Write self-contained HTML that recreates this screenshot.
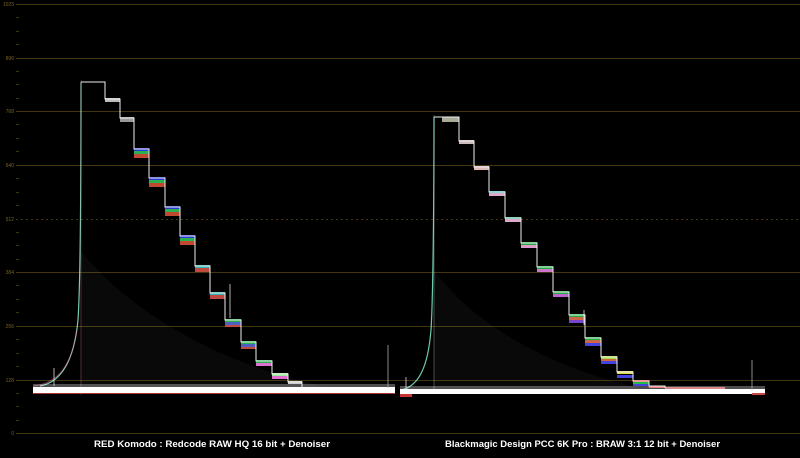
<!DOCTYPE html>
<html><head><style>
html,body{margin:0;padding:0;background:#000;width:800px;height:458px;overflow:hidden}
svg{display:block}
</style></head><body>
<svg width="800" height="458" viewBox="0 0 800 458" xmlns="http://www.w3.org/2000/svg">
<rect width="800" height="458" fill="#000"/>
<!-- grid -->
<g stroke="#43350f" stroke-width="1">
<line x1="16" y1="4.5" x2="800" y2="4.5"/>
<line x1="16" y1="58.5" x2="800" y2="58.5"/>
<line x1="16" y1="111.5" x2="800" y2="111.5"/>
<line x1="16" y1="165.5" x2="800" y2="165.5"/>
<line x1="16" y1="272.5" x2="800" y2="272.5"/>
<line x1="16" y1="326.5" x2="800" y2="326.5"/>
<line x1="16" y1="380.5" x2="800" y2="380.5"/>
<line x1="16" y1="433.5" x2="800" y2="433.5"/>
<line x1="16" y1="219.5" x2="800" y2="219.5" stroke-dasharray="2,3"/>
</g>
<g stroke="#43350f" stroke-width="1">
<line x1="16" y1="17.5" x2="19" y2="17.5"/><line x1="16" y1="31.5" x2="19" y2="31.5"/><line x1="16" y1="44.5" x2="19" y2="44.5"/>
<line x1="16" y1="71.5" x2="19" y2="71.5"/><line x1="16" y1="84.5" x2="19" y2="84.5"/><line x1="16" y1="98.5" x2="19" y2="98.5"/>
<line x1="16" y1="124.5" x2="19" y2="124.5"/><line x1="16" y1="138.5" x2="19" y2="138.5"/><line x1="16" y1="151.5" x2="19" y2="151.5"/>
<line x1="16" y1="178.5" x2="19" y2="178.5"/><line x1="16" y1="192.5" x2="19" y2="192.5"/><line x1="16" y1="205.5" x2="19" y2="205.5"/>
<line x1="16" y1="232.5" x2="19" y2="232.5"/><line x1="16" y1="245.5" x2="19" y2="245.5"/><line x1="16" y1="259.5" x2="19" y2="259.5"/>
<line x1="16" y1="285.5" x2="19" y2="285.5"/><line x1="16" y1="299.5" x2="19" y2="299.5"/><line x1="16" y1="312.5" x2="19" y2="312.5"/>
<line x1="16" y1="339.5" x2="19" y2="339.5"/><line x1="16" y1="353.5" x2="19" y2="353.5"/><line x1="16" y1="366.5" x2="19" y2="366.5"/>
<line x1="16" y1="393.5" x2="19" y2="393.5"/><line x1="16" y1="406.5" x2="19" y2="406.5"/><line x1="16" y1="420.5" x2="19" y2="420.5"/>
</g>
<g fill="#7a6420" font-family="Liberation Sans, sans-serif" font-size="5" text-anchor="end">
<text x="14" y="6">1023</text><text x="14" y="60">896</text><text x="14" y="113">768</text><text x="14" y="167">640</text>
<text x="14" y="221">512</text><text x="14" y="274">384</text><text x="14" y="328">256</text><text x="14" y="382">128</text><text x="14" y="435">0</text>
</g>

<!-- haze -->
<path d="M80 250 C120 300 200 360 330 388 L80 388 Z" fill="#fff" opacity="0.035"/>
<path d="M434 270 C470 320 540 365 640 388 L434 388 Z" fill="#fff" opacity="0.035"/>

<!-- LEFT waveform -->
<path d="M40 386 C62 382 74 360 78 320 C80 290 81 200 81 82" stroke="#9fd" stroke-width="1.2" fill="none" opacity="0.8"/>
<path d="M34 386 C58 383 72 365 77 330" stroke="#f6a" stroke-width="1" fill="none" opacity="0.5"/>
<line x1="81" y1="80" x2="81" y2="395" stroke="#c88" stroke-width="0.6" opacity="0.5"/>
<g>
<rect x="105" y="98" width="15" height="4" fill="#bbb"/>
<rect x="120" y="117" width="14" height="5" fill="#999"/>
<g><rect x="134" y="148" width="15" height="3" fill="#2a3ad0"/><rect x="134" y="151" width="15" height="3" fill="#2ab050"/><rect x="134" y="154" width="15" height="4" fill="#c04a30"/></g>
<g><rect x="149" y="177" width="16" height="3" fill="#2a3ad0"/><rect x="149" y="180" width="16" height="3" fill="#2ab050"/><rect x="149" y="183" width="16" height="4" fill="#c04a30"/></g>
<g><rect x="165" y="206" width="15" height="3" fill="#2a3ad0"/><rect x="165" y="209" width="15" height="3" fill="#2ab050"/><rect x="165" y="212" width="15" height="4" fill="#c04a30"/></g>
<g><rect x="180" y="235" width="15" height="3" fill="#2a3ad0"/><rect x="180" y="238" width="15" height="3" fill="#2ab050"/><rect x="180" y="241" width="15" height="4" fill="#c04a30"/></g>
<g><rect x="195" y="265" width="15" height="3" fill="#3ab0b0"/><rect x="195" y="268" width="15" height="4" fill="#c04a40"/></g>
<g><rect x="210" y="292" width="15" height="3" fill="#3ab0b0"/><rect x="210" y="295" width="15" height="4" fill="#c04a40"/></g>
<g><rect x="225" y="319" width="16" height="3" fill="#2ab050"/><rect x="225" y="322" width="16" height="3" fill="#5060c0"/><rect x="225" y="325" width="16" height="2" fill="#c04a40"/></g>
<g><rect x="241" y="341" width="15" height="3" fill="#2ab050"/><rect x="241" y="344" width="15" height="3" fill="#5060c0"/><rect x="241" y="347" width="15" height="2" fill="#c04a40"/></g>
<g><rect x="256" y="360" width="16" height="3" fill="#2ab050"/><rect x="256" y="363" width="16" height="3" fill="#e070d0"/></g>
<g><rect x="272" y="373" width="16" height="3" fill="#9e9"/><rect x="272" y="376" width="16" height="3" fill="#e070d0"/></g>
<g><rect x="288" y="381" width="14" height="3" fill="#ccc"/></g>
<line x1="230" y1="284" x2="230" y2="318" stroke="#ddd" stroke-width="0.8"/>
</g>
<path d="M81 82 H105 V99 H120 V118 H134 V149 H149 V178 H165 V207 H180 V236 H195 V266 H210 V293 H225 V320 H241 V342 H256 V361 H272 V374 H288 V382 H302 V387" stroke="#eee" stroke-width="1" fill="none"/>
<rect x="33" y="384" width="362" height="9" fill="#fff" opacity="0.3"/>
<rect x="33" y="387" width="362" height="6" fill="#fff"/>
<rect x="33" y="393" width="362" height="1" fill="#a33"/>
<line x1="54" y1="368" x2="54" y2="386" stroke="#ddd" stroke-width="0.8"/>
<line x1="388" y1="345" x2="388" y2="388" stroke="#aaa" stroke-width="0.8"/>

<!-- RIGHT waveform -->
<path d="M402 390 C420 385 428 365 431 330 C433 300 434 200 434 117" stroke="#8fd" stroke-width="1.2" fill="none" opacity="0.8"/>
<line x1="434" y1="115" x2="434" y2="390" stroke="#ccc" stroke-width="0.6" opacity="0.6"/>
<g>
<rect x="442" y="117" width="17" height="5" fill="#aa9"/>
<rect x="459" y="140" width="15" height="4" fill="#cbb"/>
<rect x="474" y="166" width="15" height="4" fill="#dbb"/>
<g><rect x="489" y="191" width="16" height="2" fill="#3bb"/><rect x="489" y="193" width="16" height="3" fill="#dac"/></g>
<g><rect x="505" y="217" width="16" height="2" fill="#3b8"/><rect x="505" y="219" width="16" height="3" fill="#dac"/></g>
<g><rect x="521" y="242" width="16" height="3" fill="#2a4"/><rect x="521" y="245" width="16" height="3" fill="#d9c"/></g>
<g><rect x="537" y="266" width="16" height="3" fill="#2a4"/><rect x="537" y="269" width="16" height="3" fill="#c7c"/></g>
<g><rect x="553" y="291" width="16" height="3" fill="#2a4"/><rect x="553" y="294" width="16" height="3" fill="#b6c"/></g>
<g><rect x="569" y="314" width="16" height="3" fill="#2a4"/><rect x="569" y="317" width="16" height="3" fill="#c64"/><rect x="569" y="320" width="16" height="3" fill="#74c"/></g>
<g><rect x="585" y="337" width="16" height="3" fill="#2a4"/><rect x="585" y="340" width="16" height="3" fill="#c64"/><rect x="585" y="343" width="16" height="3" fill="#44d"/></g>
<g><rect x="601" y="356" width="16" height="3" fill="#ad4"/><rect x="601" y="359" width="16" height="2" fill="#c64"/><rect x="601" y="361" width="16" height="3" fill="#44d"/></g>
<g><rect x="617" y="371" width="16" height="3" fill="#dd5"/><rect x="617" y="375" width="16" height="3" fill="#44d"/></g>
<g><rect x="633" y="380" width="16" height="2" fill="#d44"/><rect x="633" y="382" width="16" height="2" fill="#2b4"/><rect x="633" y="384" width="16" height="2" fill="#44d"/></g>
<rect x="649" y="386" width="16" height="2" fill="#d44"/>
<rect x="665" y="387" width="60" height="2" fill="#c55"/>
<line x1="584" y1="310" x2="584" y2="325" stroke="#ddd" stroke-width="0.8"/>
</g>
<path d="M434 117 H459 V141 H474 V167 H489 V192 H505 V218 H521 V243 H537 V267 H553 V292 H569 V315 H585 V338 H601 V357 H617 V372 H633 V381 H649 V386 H665 V388" stroke="#eee" stroke-width="1" fill="none"/>
<rect x="400" y="386" width="365" height="8" fill="#fff" opacity="0.3"/>
<rect x="400" y="389" width="365" height="5" fill="#fff"/>
<rect x="752" y="393" width="13" height="2" fill="#c44"/>
<rect x="400" y="394" width="12" height="3" fill="#c33"/>
<line x1="752" y1="360" x2="752" y2="390" stroke="#aaa" stroke-width="0.8"/>
<line x1="406" y1="377" x2="406" y2="390" stroke="#ddd" stroke-width="0.8"/>

<!-- labels -->
<g fill="#fff" font-family="Liberation Sans, sans-serif" font-size="9.5" font-weight="bold">
<text x="94" y="447" textLength="236" lengthAdjust="spacingAndGlyphs">RED Komodo : Redcode RAW HQ 16 bit + Denoiser</text>
<text x="445" y="447" textLength="275" lengthAdjust="spacingAndGlyphs">Blackmagic Design PCC 6K Pro : BRAW 3:1 12 bit + Denoiser</text>
</g>
</svg>
</body></html>
